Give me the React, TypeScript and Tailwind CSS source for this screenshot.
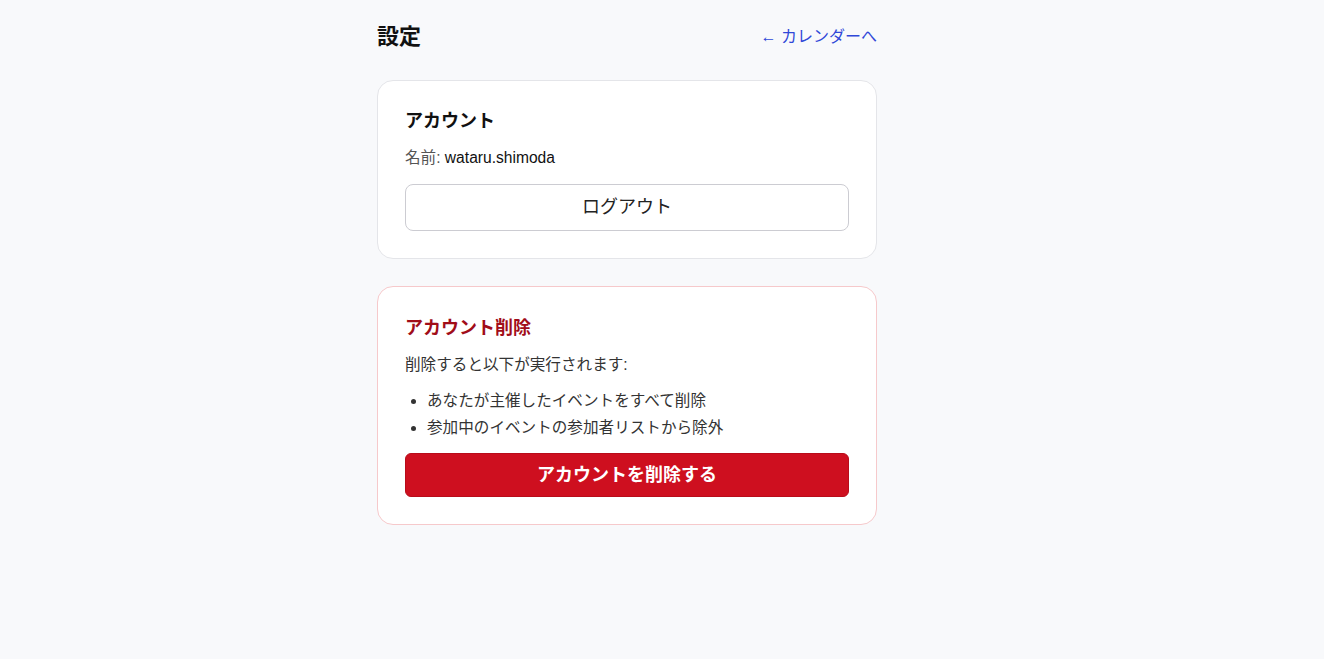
export default function App() {
  return (
    <div
      className="min-h-screen bg-[#f8f9fb] text-[#111]"
      style={{ fontFamily: '"Liberation Sans", "Noto Sans CJK JP", sans-serif' }}
    >
      <div className="ml-[377px] w-[500px] pt-[22px]">
        <div className="flex items-center justify-between">
          <h1 className="text-[22px] font-bold leading-[30px]">設定</h1>
          <a href="#" className="text-[16px] text-[#3048d8]">
            ← カレンダーへ
          </a>
        </div>

        <div className="mt-[28px] rounded-[16px] border border-[#e4e5e9] bg-white px-[27px] pt-[27px] pb-[27px]">
          <h2 className="text-[18px] font-bold leading-[27px]">アカウント</h2>
          <p className="mt-[12px] text-[15.6px] leading-[22px]">
            <span className="text-[#555]">名前: </span>
            wataru.shimoda
          </p>
          <button className="mt-[15px] h-[47px] w-full rounded-[8px] border border-[#ccccd2] bg-white text-[18px] font-normal text-[#222]">
            ログアウト
          </button>
        </div>

        <div className="mt-[27px] rounded-[16px] border border-[#f6c9cb] bg-white px-[27px] pt-[28px] pb-[27px]">
          <h2 className="text-[18px] font-bold leading-[27px] text-[#a10d19]">アカウント削除</h2>
          <p className="mt-[12px] text-[15.6px] leading-[22px] text-[#333]">削除すると以下が実行されます:</p>
          <ul className="mt-[11px] list-disc pl-[22px] text-[15.6px] leading-[27px] text-[#333]">
            <li>あなたが主催したイベントをすべて削除</li>
            <li>参加中のイベントの参加者リストから除外</li>
          </ul>
          <button className="mt-[12px] h-[44px] w-full rounded-[6px] border border-[#b80c1a] bg-[#ce0f1f] text-[18px] font-bold text-white">
            アカウントを削除する
          </button>
        </div>
      </div>
    </div>
  );
}
